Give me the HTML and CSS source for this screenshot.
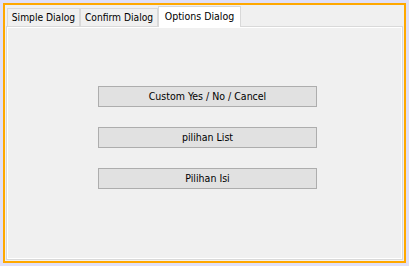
FILE: index.html
```html
<!DOCTYPE html>
<html>
<head>
<meta charset="utf-8">
<link rel="stylesheet" href="styles.css">
</head>
<body>
<div class="frame">
  <div class="tabs">
    <div class="tab tab-simple">Simple Dialog</div>
    <div class="tab tab-confirm">Confirm Dialog</div>
    <div class="tab tab-options active">Options Dialog</div>
  </div>
  <div class="panel">
    <div class="btn">Custom Yes / No / Cancel</div>
    <div class="btn">pilihan List</div>
    <div class="btn">Pilihan Isi</div>
  </div>
</div>
</body>
</html>
```
FILE: styles.css
```css
html, body {
  margin: 0;
  padding: 0;
}
body {
  background: #e0e0f8;
  width: 409px;
  height: 266px;
  overflow: hidden;
  font-family: "DejaVu Sans Condensed", "DejaVu Sans", sans-serif;
  font-size: 10.5px;
  color: #000;
}
.frame {
  margin: 3px;
  border: 2px solid #ffa800;
  background: #f0f0f0;
  padding: 1px;
  box-sizing: border-box;
  display: flex;
  flex-direction: column;
  width: 403px;
  height: 260px;
}
.tabs {
  display: flex;
  align-items: flex-end;
  height: 20px;
  padding-left: 1px;
  position: relative;
  z-index: 1;
}
.tab {
  height: 18px;
  box-sizing: border-box;
  border: 1px solid #d9d9d9;
  border-bottom: none;
  text-align: center;
  line-height: 17px;
  background: #f0f0f0;
  white-space: nowrap;
  font-size: 10.2px;
}
.tab-simple { width: 73px; }
.tab-confirm { width: 78px; }
.tab-options { width: 83px; }
.tab.active {
  height: 21px;
  margin-bottom: -1px;
  background: #ffffff;
  line-height: 19px;
  font-size: 10.5px;
}
.panel {
  flex: 1;
  border: 1px solid #d9d9d9;
  box-shadow: inset 1px 1px 0 #ffffff, inset -1px -1px 0 #ffffff;
  display: flex;
  flex-direction: column;
  align-items: flex-start;
  padding-top: 59px;
  gap: 20px;
}
.btn {
  margin-left: 91px;
  width: 219px;
  height: 21px;
  box-sizing: border-box;
  border: 1px solid #adadad;
  background: #e1e1e1;
  text-align: center;
  line-height: 19px;
}
```
